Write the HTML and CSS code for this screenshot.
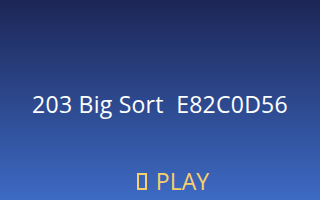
FILE: index.html
```html
<!DOCTYPE html>
<html>
<head>
<meta charset="utf-8">
<link rel="stylesheet" href="styles.css">
</head>
<body>
<div class="screen">
  <div class="title">203 Big Sort  E82C0D56</div>
  <div class="play"><span class="tofu"></span> PLAY</div>
</div>
</body>
</html>
```
FILE: styles.css
```css
html, body {
  margin: 0;
  padding: 0;
  width: 320px;
  height: 200px;
  overflow: hidden;
}
.screen {
  width: 320px;
  height: 200px;
  background: linear-gradient(to bottom, #1c2656 0%, #3d6ac3 100%);
  display: flex;
  flex-direction: column;
  align-items: center;
  font-family: "Open Sans", "Noto Sans", sans-serif;
}
.title {
  margin-top: 89px;
  color: #ffffff;
  font-size: 23px;
  line-height: 30px;
  letter-spacing: 0.25px;
  white-space: pre;
}
.play {
  margin-top: 47px;
  padding-left: 26px;
  color: #f7d06c;
  font-size: 23px;
  line-height: 30px;
  white-space: pre;
}
.tofu {
  display: inline-block;
  width: 10px;
  height: 17px;
  border: 2px solid #f7d06c;
  box-sizing: border-box;
  margin-right: 3px;
  vertical-align: baseline;
}
```
